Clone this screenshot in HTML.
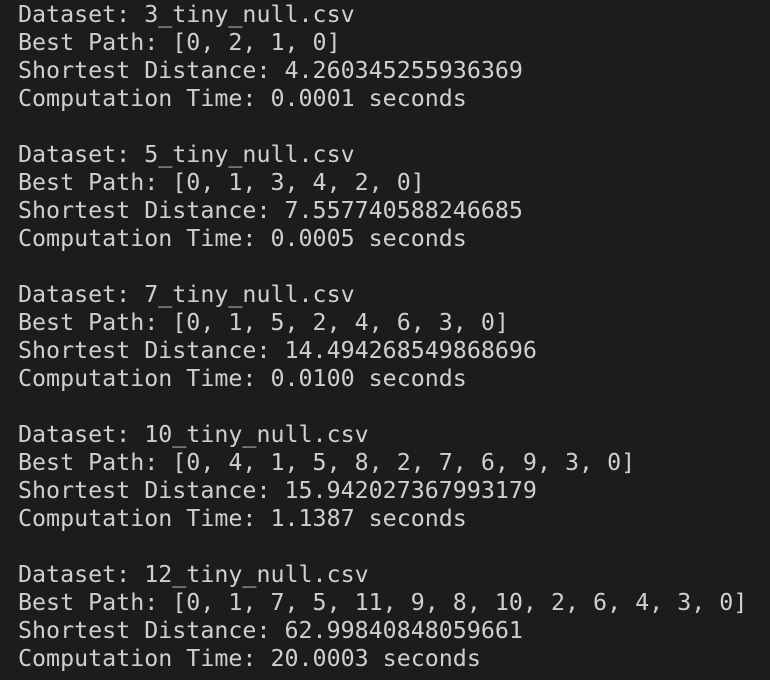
<!DOCTYPE html>
<html><head><style>
html,body{margin:0;padding:0;background:#1c1c1c;width:770px;height:680px;overflow:hidden}
pre{margin:0;position:absolute;left:18px;top:1px;font-family:"DejaVu Sans Mono","Liberation Mono",monospace;font-size:23.3px;line-height:28px;color:#cfcfcf}
</style></head><body><pre>Dataset: 3_tiny_null.csv
Best Path: [0, 2, 1, 0]
Shortest Distance: 4.260345255936369
Computation Time: 0.0001 seconds

Dataset: 5_tiny_null.csv
Best Path: [0, 1, 3, 4, 2, 0]
Shortest Distance: 7.557740588246685
Computation Time: 0.0005 seconds

Dataset: 7_tiny_null.csv
Best Path: [0, 1, 5, 2, 4, 6, 3, 0]
Shortest Distance: 14.494268549868696
Computation Time: 0.0100 seconds

Dataset: 10_tiny_null.csv
Best Path: [0, 4, 1, 5, 8, 2, 7, 6, 9, 3, 0]
Shortest Distance: 15.942027367993179
Computation Time: 1.1387 seconds

Dataset: 12_tiny_null.csv
Best Path: [0, 1, 7, 5, 11, 9, 8, 10, 2, 6, 4, 3, 0]
Shortest Distance: 62.99840848059661
Computation Time: 20.0003 seconds</pre></body></html>
